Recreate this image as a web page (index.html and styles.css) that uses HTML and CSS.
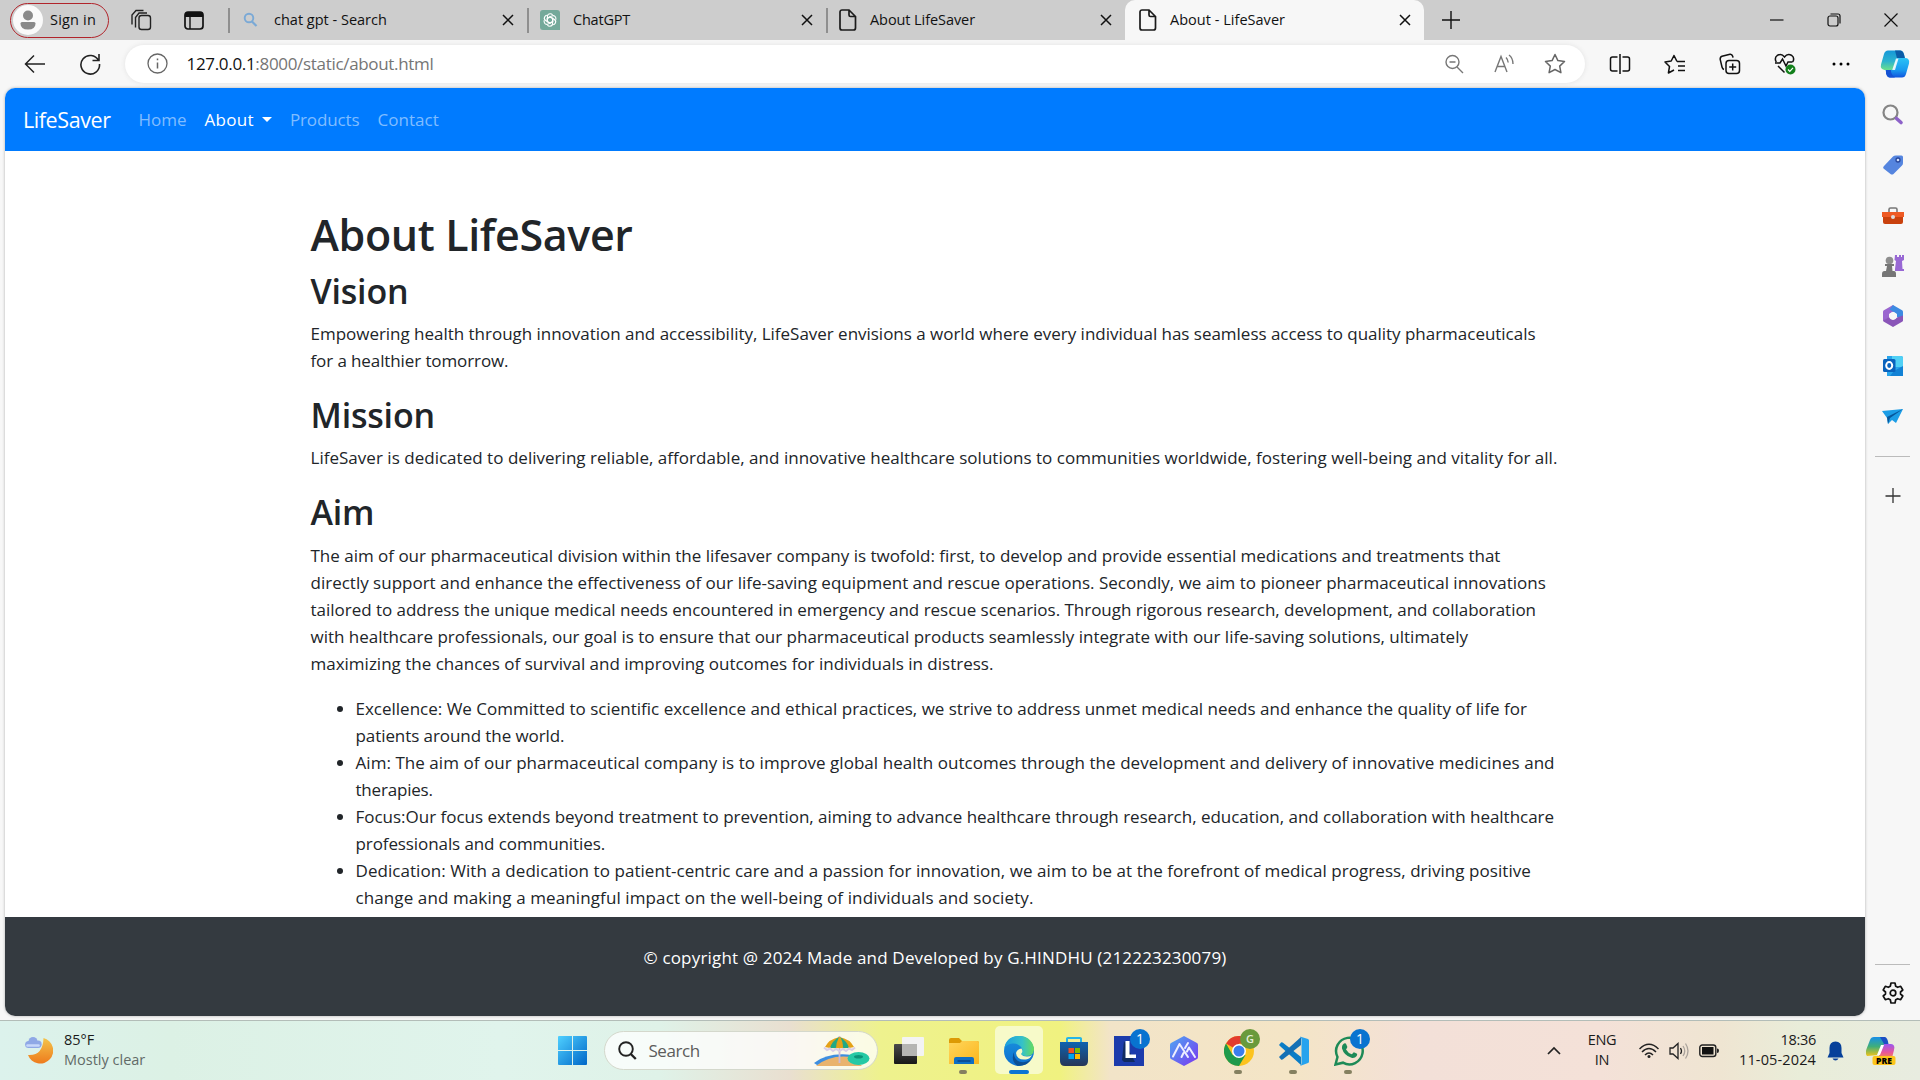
FILE: index.html
```html
<!DOCTYPE html>
<html lang="en">
<head>
<meta charset="utf-8">
<title>About - LifeSaver</title>
<link rel="stylesheet" href="styles.css">
</head>
<body>
<svg class="defs" width="0" height="0">
  <symbol id="x" viewBox="0 0 12 12"><path d="M1 1l10 10M11 1L1 11" fill="none" stroke="#111" stroke-width="1.5"/></symbol>
  <symbol id="doc" viewBox="0 0 18 22"><path d="M3 1h7l6.500 6.500V19a2 2 0 0 1-2 2H3a2 2 0 0 1-2-2V3a2 2 0 0 1 2-2zM10 1v5a1.500 1.500 0 0 0 1.500 1.500h5" fill="none" stroke="#1b1b1b" stroke-width="1.700"/></symbol>
  <linearGradient id="gcop" x1="0" y1="0" x2="0" y2="1"><stop offset="0" stop-color="#1597d8"/><stop offset=".55" stop-color="#2cb3cf"/><stop offset="1" stop-color="#6be08b"/></linearGradient>
  <linearGradient id="gcop2" x1="0" y1="0" x2="0" y2="1"><stop offset="0" stop-color="#2bc3f5"/><stop offset=".6" stop-color="#1a9cf0"/><stop offset="1" stop-color="#1155dd"/></linearGradient>
  <linearGradient id="gmoon" x1="0" y1="0" x2="0" y2="1"><stop offset="0" stop-color="#f4c44a"/><stop offset="1" stop-color="#ee7b1d"/></linearGradient>
  <linearGradient id="gwin" x1="0" y1="0" x2="1" y2="1"><stop offset="0" stop-color="#4fd0ff"/><stop offset="1" stop-color="#0067c8"/></linearGradient>
  <linearGradient id="gdark" x1="0" y1="0" x2="0" y2="1"><stop offset="0" stop-color="#4a4a4a"/><stop offset="1" stop-color="#181818"/></linearGradient>
  <linearGradient id="gfold" x1="0" y1="0" x2="1" y2="1"><stop offset="0" stop-color="#ffd55c"/><stop offset="1" stop-color="#fbb71c"/></linearGradient>
  <linearGradient id="gedge" x1="0" y1="0" x2="1" y2="0"><stop offset="0" stop-color="#1a9de0"/><stop offset=".6" stop-color="#35c1c9"/><stop offset="1" stop-color="#66dc5c"/></linearGradient>
  <linearGradient id="gedge2" x1="0" y1="0" x2="0" y2="1"><stop offset="0" stop-color="#1a93dd"/><stop offset="1" stop-color="#0d6fd0"/></linearGradient>
  <linearGradient id="gstore" x1="0" y1="0" x2="0" y2="1"><stop offset="0" stop-color="#0d63b0"/><stop offset="1" stop-color="#273657"/></linearGradient>
  <linearGradient id="gai" x1="0" y1="0" x2="1" y2="1"><stop offset="0" stop-color="#4ea8f2"/><stop offset="1" stop-color="#7a35f0"/></linearGradient>
  <linearGradient id="gpre" x1="0" y1="0" x2="0" y2="1"><stop offset="0" stop-color="#178fe8"/><stop offset=".5" stop-color="#3fae7a"/><stop offset="1" stop-color="#f0c419"/></linearGradient>
  <linearGradient id="gpre2" x1="0" y1="0" x2="0" y2="1"><stop offset="0" stop-color="#9a57f0"/><stop offset=".6" stop-color="#e8569a"/><stop offset="1" stop-color="#f08a4a"/></linearGradient>
</svg>

<header class="tabs">
  <div class="lead">
    <div class="signin">
      <svg width="30" height="30" viewBox="0 0 30 30"><circle cx="15" cy="15" r="15" fill="#fafafa"/><circle cx="15" cy="10.500" r="5" fill="#8a8a8a"/><path d="M7.500 18.500q0-1.500 1.500-1.500h12q1.500 0 1.500 1.500 0 6-7.500 6t-7.500-6z" fill="#8a8a8a"/></svg>
      <span class="t-sign">Sign in</span>
    </div>
    <svg class="ic-work" width="22" height="22" viewBox="0 0 22 22" fill="none" stroke="#222" stroke-width="1.400"><rect x="9" y="6.500" width="11.500" height="14" rx="2.500"/><path d="M5.500 18.500V8.500L9 4H17M2 15.500V6l4-4.500H13.500"/></svg>
    <svg class="ic-vtab" width="20" height="19" viewBox="0 0 20 19"><rect x="1" y="1" width="18" height="17" rx="3" fill="none" stroke="#111" stroke-width="1.700"/><path d="M1 6V4q0-3 3-3h12q3 0 3 3v2z" fill="#111"/><path d="M6 6v12" stroke="#111" stroke-width="1.400"/></svg>
  </div>
  <div class="tab"><svg class="fav" width="20" height="20" viewBox="0 0 20 20"><circle cx="8" cy="8" r="4.300" fill="none" stroke="#7aa9d6" stroke-width="1.900"/><path d="M11 11.500l4.500 4.500" stroke="#7aa9d6" stroke-width="2.200"/></svg><span class="t-tab1">chat gpt - Search</span><svg class="close" width="12" height="12"><use href="#x"/></svg></div>
  <div class="tab"><svg class="fav" width="20" height="20" viewBox="0 0 20 20"><path d="M3 0h14q3 0 3 3v17H3q-3 0-3-3V3q0-3 3-3z" fill="#74a99a"/><g fill="none" stroke="#fff" stroke-width="1.100"><g id="petal"><path d="M7.400 12V6.800q0-3 2.800-3 1.500 0 2.400 1.100M7.400 8.300l3-1.800"/></g><use href="#petal" transform="rotate(60 10 10)"/><use href="#petal" transform="rotate(120 10 10)"/><use href="#petal" transform="rotate(180 10 10)"/><use href="#petal" transform="rotate(240 10 10)"/><use href="#petal" transform="rotate(300 10 10)"/></g></svg><span class="t-tab2">ChatGPT</span><svg class="close" width="12" height="12"><use href="#x"/></svg></div>
  <div class="tab"><svg class="fav" width="18" height="22"><use href="#doc"/></svg><span class="t-tab3">About LifeSaver</span><svg class="close" width="12" height="12"><use href="#x"/></svg></div>
  <div class="tab active"><svg class="fav" width="18" height="22"><use href="#doc"/></svg><span class="t-tab4">About - LifeSaver</span><svg class="close" width="12" height="12"><use href="#x"/></svg></div>
  <svg class="newtab" width="18" height="18" viewBox="0 0 18 18"><path d="M9 0v18M0 9h18" stroke="#111" stroke-width="1.400"/></svg>
  <div class="winctl">
    <svg width="14" height="14" viewBox="0 0 14 14"><path d="M0 7h13.500" stroke="#111" stroke-width="1.200"/></svg>
    <svg width="14" height="14" viewBox="0 0 14 14" fill="none" stroke="#111" stroke-width="1.200"><rect x="1" y="3" width="10" height="10" rx="2"/><path d="M3.500 1H11q2 0 2 2v7.500"/></svg>
    <svg width="14" height="14" viewBox="0 0 14 14"><path d="M.5.5l13 13M13.500.5l-13 13" stroke="#111" stroke-width="1.200"/></svg>
  </div>
</header>

<div class="toolbar">
  <svg class="back" width="22" height="20" viewBox="0 0 22 20" fill="none" stroke="#222" stroke-width="1.500"><path d="M21 10H1.500M10 1.500L1.500 10l8.500 8.500"/></svg>
  <svg class="reload" width="22" height="22" viewBox="0 0 22 22" fill="none" stroke="#222" stroke-width="1.600"><path d="M19.500 7.500A9.300 9.300 0 1 0 20.500 11M20 1v6.500h-6.500"/></svg>
  <div class="address">
    <svg width="21" height="21" viewBox="0 0 21 21"><circle cx="10.500" cy="10.500" r="9.500" fill="none" stroke="#666" stroke-width="1.300"/><path d="M10.500 9.500v6M10.500 5.500v1.800" stroke="#666" stroke-width="1.500"/></svg>
    <span class="url">127.0.0.1<i>:8000/static/about.html</i></span>
    <div class="addr-icons">
      <svg width="20" height="20" viewBox="0 0 20 20" fill="none" stroke="#777" stroke-width="1.400"><circle cx="8.500" cy="8" r="6.500"/><path d="M13 13l6 6M5.500 8h6"/></svg>
      <svg width="21" height="20" viewBox="0 0 21 20" fill="none" stroke="#777" stroke-width="1.400"><path d="M1 18L7 2.500 13 18M3.200 12.500h7.600M12 3.500q2 2 2.200 5M15 1q4 3 4 9"/></svg>
      <svg width="22" height="21" viewBox="0 0 22 21" fill="none" stroke="#666" stroke-width="1.500" stroke-linejoin="round"><path d="M11 1.500l2.900 6.100 6.600.9-4.800 4.600 1.200 6.600-5.900-3.200-5.900 3.200 1.200-6.600-4.800-4.600 6.600-.9z"/></svg>
    </div>
  </div>
  <div class="tools">
    <svg width="22" height="20" viewBox="0 0 22 20" fill="none" stroke="#111" stroke-width="1.500"><path d="M8.500 3H3.500Q1.500 3 1.500 5v10q0 2 2 2h5M13.500 3h5q2 0 2 2v10q0 2-2 2h-5M11 0v20"/></svg>
    <svg width="22" height="20" viewBox="0 0 22 20" fill="none" stroke="#111" stroke-width="1.500" stroke-linejoin="round"><path d="M13 7.500l-3-6-2.800 5.500L1 8l4.500 4.500L4.400 19 10 16M13 7.500h8M14 12h7M14 16.500h7"/></svg>
    <svg width="22" height="22" viewBox="0 0 22 22" fill="none" stroke="#111" stroke-width="1.500"><rect x="7" y="7.500" width="13.500" height="13" rx="3"/><path d="M13.700 10.500v7M10.200 14h7M5 16.500Q3.500 16 3 14L1.200 6.500Q1 4 3 3.300L11 1.200q2-.3 2.700 2l.3 1.500"/></svg>
    <svg width="22" height="22" viewBox="0 0 22 22" fill="none" stroke="#111" stroke-width="1.500"><path d="M2.300 9Q0 5 3.200 2.500 7.500 0 10.500 4 13.500 0 17.800 2.500 21 5 18.700 9M1 10h5l2.500-4 3.500 7 2-4h4.500M4 13l6.500 6.500"/><circle cx="16.500" cy="16.500" r="5" fill="#13801c" stroke="none"/><path d="M14 16.500l1.800 1.800 3.200-3.500" stroke="#fff" stroke-width="1.200"/></svg>
    <svg width="22" height="20" viewBox="0 0 22 20"><circle cx="4" cy="10" r="1.500"/><circle cx="11" cy="10" r="1.500"/><circle cx="18" cy="10" r="1.500"/></svg>
    <svg class="copilot" width="30" height="28" viewBox="0 0 30 28"><path d="M8 .5h12q3 0 4 4l1 4h-5q-3 0-4 3L13 20H4.500Q0 19 1 14.500L4 4Q5 .5 8 .5z" fill="url(#gcop)"/><path d="M15 .5h5q3 0 4 4l1 4h-8z" fill="#0b5ca8"/><path d="M22 27.500H10q-2.500 0-3.500-3.500l-1-4h5q3 0 4-3L17.500 8H25q5 0 4 5.500L26 24q-1 3.500-4 3.500z" fill="url(#gcop2)"/><path d="M6 20h5q-.5 4 4 7.500h-5q-3 0-4-4z" fill="#1552d3"/><path d="M16 8.500h2.500L15 20h-2.800z" fill="#fff" opacity=".85"/></svg>
  </div>
</div>

<div class="middle">
  <main class="page">
    <nav class="navbar">
      <span class="brand">LifeSaver</span>
      <span class="nav-home">Home</span>
      <span class="nav-about">About</span><b class="caret"></b>
      <span class="nav-prod">Products</span>
      <span class="nav-cont">Contact</span>
    </nav>
    <div class="container">
      <h1><span class="h-a">About LifeSaver</span></h1>
      <h2><span class="h-v">Vision</span></h2>
      <p><span class="v1">Empowering health through innovation and accessibility, LifeSaver envisions a world where every individual has seamless access to quality pharmaceuticals</span><br>
      <span class="v2">for a healthier tomorrow.</span></p>
      <h2><span class="h-m">Mission</span></h2>
      <p><span class="m1">LifeSaver is dedicated to delivering reliable, affordable, and innovative healthcare solutions to communities worldwide, fostering well-being and vitality for all.</span></p>
      <h2><span class="h-i">Aim</span></h2>
      <p><span class="a1">The aim of our pharmaceutical division within the lifesaver company is twofold: first, to develop and provide essential medications and treatments that</span><br>
      <span class="a2">directly support and enhance the effectiveness of our life-saving equipment and rescue operations. Secondly, we aim to pioneer pharmaceutical innovations</span><br>
      <span class="a3">tailored to address the unique medical needs encountered in emergency and rescue scenarios. Through rigorous research, development, and collaboration</span><br>
      <span class="a4">with healthcare professionals, our goal is to ensure that our pharmaceutical products seamlessly integrate with our life-saving solutions, ultimately</span><br>
      <span class="a5">maximizing the chances of survival and improving outcomes for individuals in distress.</span></p>
      <ul>
        <li><span class="l1">Excellence: We Committed to scientific excellence and ethical practices, we strive to address unmet medical needs and enhance the quality of life for</span><br><span class="l2">patients around the world.</span></li>
        <li><span class="l3">Aim: The aim of our pharmaceutical company is to improve global health outcomes through the development and delivery of innovative medicines and</span><br><span class="l4">therapies.</span></li>
        <li><span class="l5">Focus:Our focus extends beyond treatment to prevention, aiming to advance healthcare through research, education, and collaboration with healthcare</span><br><span class="l6">professionals and communities.</span></li>
        <li><span class="l7">Dedication: With a dedication to patient-centric care and a passion for innovation, we aim to be at the forefront of medical progress, driving positive</span><br><span class="l8">change and making a meaningful impact on the well-being of individuals and society.</span></li>
      </ul>
    </div>
    <footer><span class="f1">© copyright @ 2024 Made and Developed by G.HINDHU (212223230079)</span></footer>
  </main>
  <aside class="side">
    <svg width="22" height="22" viewBox="0 0 22 22"><circle cx="8.500" cy="8.500" r="7" fill="none" stroke="#858585" stroke-width="2.200"/><path d="M14.500 14.500l4.500 4" stroke="#8d62c9" stroke-width="3.600" stroke-linecap="round"/></svg>
    <svg width="22" height="22" viewBox="0 0 22 22"><path d="M2 12L11 2.500Q12 1.500 14 1.500h5.500q1.500 0 1.500 1.500v6q0 1.500-1 2.500l-8.500 8.500q-1.500 1-3 0L1.500 14.500Q.5 13 2 12z" fill="#5585df"/><circle cx="16" cy="6" r="2" fill="#cfe0fc" stroke="#28479c" stroke-width="1.300"/></svg>
    <svg width="22" height="22" viewBox="0 0 22 22"><path d="M7 7V4.500Q7 3 8.500 3h5Q15 3 15 4.500V7" fill="none" stroke="#777" stroke-width="1.600"/><path d="M0 7h22v5H0z" fill="#ee5a24"/><path d="M1 12h20v5q0 2-2 2H3q-2 0-2-2z" fill="#c9410d"/><circle cx="11" cy="12" r="2" fill="#ddd"/></svg>
    <svg width="22" height="22" viewBox="0 0 22 22"><path d="M13 0h2v2h2V0h2v2h1V0h2v5l-2 1 .5 8h1.500v2H13v-2l1-8-1.500-1z" fill="#9868d4"/><circle cx="7.500" cy="5.500" r="3.800" fill="#8e8e8e"/><path d="M3 9h9v2h-2l.5 5h1.500q2 0 2 3v3H0v-3q0-3 2.500-3H4l1-5H3z" fill="#767676"/></svg>
    <svg width="22" height="22" viewBox="0 0 22 22"><path d="M11 0L1.500 5.500Q1 6 1 7v9l6-3.500V9l7-4z" fill="#9a66cf"/><path d="M11 0l9.500 5.500Q21 6 21 7v9l-6-4V9L7.500 4.500z" fill="#3d8ae2"/><path d="M1 15.500l6-3.500 4 3 4-2.500 6-2V15q0 1-.5 1.500L11 22l-9.500-5.500z" fill="#8a55b8"/><circle cx="11" cy="11" r="3.800" fill="#f7f7f7"/></svg>
    <svg width="22" height="22" viewBox="0 0 22 22"><path d="M5 1h14q2 0 2 2v18H5z" fill="#28a4ea"/><path d="M10 1h9q2 0 2 2v9H10z" fill="#50d0f5"/><path d="M12 16l9-5v10H8z" fill="#1282d5"/><rect x="1" y="4" width="12.500" height="13" rx="1.500" fill="#0a63bd"/><ellipse cx="7.200" cy="10.500" rx="3" ry="3.400" fill="none" stroke="#fff" stroke-width="2"/></svg>
    <svg width="22" height="22" viewBox="0 0 22 22"><path d="M0 5l21-2-7 14-4-3-4 4-1-6z" fill="#1c9de6"/><path d="M5 11L21 3 8 12l-2 6z" fill="#07569a"/></svg>
    <hr>
    <svg class="plus" width="16" height="16" viewBox="0 0 16 16"><path d="M8 0v15M.5 8h15" stroke="#333" stroke-width="1.300"/></svg>
    <hr class="low">
    <svg class="gear" width="22" height="22" viewBox="0 0 22 22" fill="none" stroke="#111" stroke-width="1.700" stroke-linejoin="round"><path d="M9 1h4l.7 3.200 2 1.100 3-1L20.800 8l-2.300 2v2l2.300 2-2.100 3.700-3-1-2 1.100L13 21H9l-.7-3.200-2-1.100-3 1L1.200 14l2.300-2v-2L1.200 8l2.100-3.700 3 1 2-1.100z"/><circle cx="11" cy="11" r="2.800"/></svg>
  </aside>
</div>

<div class="taskbar">
  <div class="weather">
    <svg width="28" height="30" viewBox="0 0 28 30"><path d="M18.500 2A13 13 0 1 1 3 19Q18 20 18.500 2z" fill="url(#gmoon)"/><g fill="#8fa8e6"><circle cx="8" cy="5.500" r="4.500"/><circle cx="3.600" cy="8.500" r="3.500"/><circle cx="13" cy="8.300" r="3.700"/><rect x="3" y="6" width="10" height="6"/></g><path d="M2.500 9.500h11" stroke="#c8d8fa" stroke-width="2.600" stroke-linecap="round"/></svg>
    <div class="wtext"><span class="w1">85°F</span><span class="w2">Mostly clear</span></div>
  </div>
  <svg class="start" width="29" height="29" viewBox="0 0 29 29"><path d="M0 1q0-1 1-1h13v14H0zM15 0h13q1 0 1 1v13H15zM0 15h14v14H1q-1 0-1-1zM15 15h14v13q0 1-1 1H15z" fill="url(#gwin)"/></svg>
  <div class="search">
    <svg width="19" height="19" viewBox="0 0 19 19"><circle cx="8" cy="8" r="6.800" fill="none" stroke="#222" stroke-width="1.900"/><path d="M12.800 13l5 5" stroke="#222" stroke-width="2.400"/></svg>
    <span class="s1">Search</span>
    <svg class="beach" width="56" height="32" viewBox="0 0 56 32"><path d="M0 28Q14 17 38 20l3 4-38 6z" fill="#3d8ee0"/><path d="M2 31Q16 19 38 22l10 9z" fill="#e9b36d"/><path d="M25.500 1v27" stroke="#cbb9d6" stroke-width="1.800"/><path d="M11 12Q15 4 25.500 2 36 4 40 12q-7 2-14.500 1Q18 14 11 12z" fill="#e4a117"/><path d="M16 13Q18 6 25 2q-3 6-3 11zM29 13Q29 6 26 2q7 4 9 11z" fill="#22a884"/><path d="M10 12.500l3 2.500 3-1.500 3 2.500 3-2 3.500 2 3.500-2 3 2 3-2.500 3 1.500 3-2.500" fill="none" stroke="#d9cde6" stroke-width="2"/><ellipse cx="44.500" cy="23.500" rx="11" ry="6.500" fill="#26c9a5"/><ellipse cx="44.500" cy="21.800" rx="4.500" ry="1.800" fill="#0c9478"/></svg>
  </div>
  <div class="apps">
    <div class="app"><svg width="30" height="30" viewBox="0 0 30 30"><rect y="8" width="23" height="20" rx="1" fill="url(#gdark)"/><rect x="8" y="1" width="22" height="19" rx="1" fill="#f3f3f3"/><path d="M8 8h15v12H8z" fill="#b5b5b3"/></svg></div>
    <div class="app"><svg width="30" height="30" viewBox="0 0 30 30"><path d="M0 4q0-2 2-2h8l3 3h15q2 0 2 2v4H0z" fill="#dc9a05"/><path d="M0 7h11l2-2h15q2 0 2 2v21H0z" fill="url(#gfold)"/><path d="M5 28v-5q0-2 2-2h16q2 0 2 2v5z" fill="#0f6fc4"/><path d="M8.500 25h13" stroke="#0a3f82" stroke-width="1.300"/></svg><i class="dot"></i></div>
    <div class="app sel"><svg width="30" height="30" viewBox="0 0 30 30"><circle cx="15" cy="15" r="15" fill="url(#gedge2)"/><path d="M.3 12Q2.500 0 15 0q12 0 15 12 .5 8-8 8-5 0-5-2.500 2-1.500 1-5Q15 7 8.500 7.500 3 8 .3 12z" fill="url(#gedge)"/><path d="M10.500 15Q8.500 22 15 25.500q6 2 12-2Q22 31 13 29.500 6 24 10.500 15z" fill="#0c4f94"/><path d="M12 17q1-4 5.500-4.500 2 3-.5 5.500 1.500 2.500 6 2.500 3 0 5-1.500-2 4-6 4.500-9 1-10-6.500z" fill="#f6f9c6"/></svg><i class="dot bar"></i></div>
    <div class="app"><svg width="30" height="30" viewBox="0 0 30 30"><path d="M8 7V2.500Q8 2 9 2h12q1 0 1 .5V7" fill="none" stroke="#24b5e8" stroke-width="2"/><path d="M1 6h28v19q0 5-5 5H6q-5 0-5-5z" fill="url(#gstore)"/><path d="M9.500 12H15v5H9.500z" fill="#f25022"/><path d="M16 12h5v5h-5z" fill="#7fba00"/><path d="M9.500 18H15v5H9.500z" fill="#00a4ef"/><path d="M16 18h5v5h-5z" fill="#ffb900"/></svg></div>
    <div class="app"><svg width="30" height="30" viewBox="0 0 30 30"><path d="M0 0h30v30H0z" fill="#1c3bac"/><path d="M10 5L8 24l2 2h11z" fill="#102a62"/><path d="M11.500 5h4v13.500H22V22H11.500z" fill="#fff"/></svg><b class="badge">1</b></div>
    <div class="app"><svg width="30" height="30" viewBox="0 0 30 30"><path d="M15 0l13 7q1 .5 1 2v12q0 1.500-1 2l-13 7-13-7q-1-.5-1-2V9q0-1.500 1-2z" fill="url(#gai)"/><path d="M4 20.500L10.500 8 19 21M12.500 21l2-4M18 15.500l2-4L26 21M16 12l3-5" fill="none" stroke="#eef" stroke-width="2" stroke-linejoin="round" stroke-linecap="round"/></svg></div>
    <div class="app"><svg width="30" height="30" viewBox="0 0 30 30"><circle cx="15" cy="15" r="15" fill="#fcc31e"/><path d="M15 15L2 7.500A15 15 0 0 1 28 7.500H15z" fill="#e33b2e"/><path d="M2 7.500l6.500 11.300L21.500 19 15 30A15 15 0 0 1 2 7.500z" fill="#1f9a4c"/><circle cx="15" cy="15" r="7" fill="#fff"/><circle cx="15" cy="15" r="5.500" fill="#3b7ded"/></svg><b class="badge green">G</b><i class="dot"></i></div>
    <div class="app"><svg width="30" height="30" viewBox="0 0 30 30"><path d="M22 1L2 19l-2 2 2 2.500q1 .5 2-.2L22 9z" fill="#0b7dc6" transform="matrix(1 0 0 -1 0 30)"/><path d="M22 1L2 19l-2 2 2 2.500q1 .5 2-.2L22 9z" fill="#1470b5"/><path d="M21 .5L29 3q1 .5 1 1.500v21q0 1-1 1.500l-8 3q1.500-1 1.500-3V3.500q0-2-1.500-3z" fill="#27a3ee"/></svg><i class="dot"></i></div>
    <div class="app"><svg width="30" height="30" viewBox="0 0 30 30"><path d="M1.500 28.500l2-7.500A13.300 13.300 0 1 1 9 26.700z" fill="none" stroke="#1d8a57" stroke-width="2.500"/><path d="M10 7.500q1.500-.8 2 .3l1.300 3q.3.800-1.300 2.700 2.200 3.700 5.700 4.800 1-.8 1.800-1.900.5-.5 3.500 1.400.5.500-.3 2.200-2 2.600-5.200 1.800Q10 19.500 8 12.500q-.4-3.500 2-5z" fill="#1d8a57"/></svg><b class="badge">1</b><i class="dot"></i></div>
  </div>
  <div class="tray">
    <svg class="chev" width="14" height="9" viewBox="0 0 14 9"><path d="M1 8l6-6 6 6" fill="none" stroke="#222" stroke-width="1.700"/></svg>
    <div class="lang"><span class="g1">ENG</span><span class="g2">IN</span></div>
    <svg class="wifi" width="20" height="16" viewBox="0 0 20 16" fill="none" stroke="#222" stroke-width="1.500"><path d="M.5 6q9.500-9.500 19 0M3 9q7-7 14 0M6 12q4-4 8 0"/><circle cx="10" cy="13.500" r="1.500" fill="#222" stroke="none"/></svg>
    <svg class="vol" width="20" height="18" viewBox="0 0 20 18" fill="none" stroke="#222" stroke-width="1.300"><path d="M1 6h3l5-4.500v15L4 12H1zM11.500 6q2 3 0 6"/><path d="M14 4q3.500 5 0 10M16.500 1.500q5 7.500 0 15" stroke="#aaa39c"/></svg>
    <svg class="bat" width="20" height="14" viewBox="0 0 20 14"><rect x=".8" y="1" width="16" height="11.500" rx="2.500" fill="none" stroke="#222" stroke-width="1.400"/><rect x="3" y="3" width="11.500" height="7.500" fill="#111"/><path d="M18 4.500q2 0 2 2.200T18 9z" fill="#222"/></svg>
    <div class="clock"><span class="c1">18:36</span><span class="c2">11-05-2024</span></div>
    <svg class="bell" width="17" height="20" viewBox="0 0 17 20"><path d="M8.500.5q6 .3 6 6.500v5l2 4.500H.5l2-4.500V7q0-6.200 6-6.500zM5.500 17.500h6q-1 2-3 2t-3-2z" fill="#06409a"/></svg>
    <svg class="pre" width="30" height="28" viewBox="0 0 30 28"><path d="M8 0h11l3 7-4 1-5 10-12 1Q-1 17 .5 12L4 3Q5 0 8 0z" fill="url(#gpre)"/><path d="M14 0h5q2.500.5 3.500 7H18z" fill="#1b4fc4"/><path d="M18 7h7q4.500.5 3 6l-2 8H12z" fill="url(#gpre2)"/><path d="M15 8h3l-4 10h-3z" fill="#fff"/><rect x="6.500" y="19" width="23" height="9" rx="2" fill="#fcc51c"/><text x="18" y="26.600" text-anchor="middle" font-size="8.500" font-weight="800" font-family="Open Sans, sans-serif">PRE</text></svg>
  </div>
</div>
</body>
</html>
```
FILE: styles.css
```css
* { box-sizing: border-box; }
body { margin: 0; width: 1920px; height: 1080px; overflow: hidden; display: flex; flex-direction: column; background: #f7f7f7; font-family: "Open Sans", "Noto Sans", sans-serif; color: #212529; }
svg { display: block; flex: none; }
span { white-space: nowrap; }
.defs { position: absolute; }

.tabs { height: 40px; flex: none; display: flex; align-items: center; background: #cdcdcd; font-size: 14.5px; color: #111; }
.tabs span { padding-bottom: 2px; }
.lead { width: 228px; display: flex; align-items: center; padding-left: 10px; }
.signin { width: 99px; height: 35px; border: 1.5px solid #b1242b; border-radius: 18px; display: flex; align-items: center; padding-left: 2px; gap: 7px; }
.t-sign { letter-spacing: .18px; }
.t-tab2 { letter-spacing: -.217px; }
.t-tab3 { letter-spacing: -.078px; }
.t-tab4 { letter-spacing: .024px; }
.ic-work { margin-left: 21px; }
.ic-vtab { margin-left: 32px; }
.tab { width: 299px; height: 25px; display: flex; align-items: center; padding: 0 13px 0 11px; border-left: 2px solid #8f8f8f; }
.tab .fav { margin-right: 13px; }
.tab .close { margin-left: auto; }
.tab.active { height: 40px; background: #f7f7f7; border: 0; border-radius: 10px 10px 0 0; padding-left: 14px; }
.newtab { margin-left: 18px; }
.winctl { margin-left: auto; display: flex; gap: 43px; padding-right: 22px; }

.toolbar { height: 48px; flex: none; display: flex; align-items: center; padding-bottom: 1px; }
.back { margin-left: 24px; }
.reload { margin-left: 33px; }
.address { margin-left: 24px; width: 1460px; height: 38px; border-radius: 19px; background: #fff; box-shadow: 0 0 5px #e2e2e2; display: flex; align-items: center; padding: 0 19px 0 22px; }
.url { margin-left: 18.5px; font-size: 17px; letter-spacing: -.318px; color: #111; padding-bottom: 1px; }
.url i { font-style: normal; color: #757575; }
.addr-icons { margin-left: auto; display: flex; align-items: center; gap: 29.5px; }
.tools { display: flex; align-items: center; gap: 33.3px; margin-left: 23.5px; }
.copilot { margin-left: -5px; }

.middle { height: 932px; flex: none; display: flex; padding-left: 5px; }
.page { width: 1860px; height: 928px; background: #fff; border-radius: 10px; overflow: hidden; box-shadow: 0 0 3px #aaa; display: flex; flex-direction: column; }
.navbar { height: 63px; flex: none; background: #007bff; display: flex; align-items: center; padding-left: 18px; font-size: 17px; color: #80bdff; }
.brand { font-size: 21.5px; letter-spacing: -.42px; color: #fff; margin-right: 28px; }
.nav-home { margin-right: 18px; }
.nav-about { color: #fff; letter-spacing: .3px; }
.nav-prod { margin-right: 18px; letter-spacing: -.13px; }
.nav-cont { letter-spacing: .06px; }
.caret { margin-left: 8px; margin-right: 18px; border: 5px solid transparent; border-top-color: #fff; border-bottom: 0; }
.container { width: 1249px; margin: 0 auto; padding-top: 54px; height: 766px; flex: none; font-size: 17px; line-height: 27px; }
h1, h2 { margin: 0 0 9px; font-weight: 600; }
h1 { font-size: 43px; line-height: 54px; letter-spacing: -.369px; padding-top: 3px; margin-bottom: 6px; }
h2 { font-size: 34px; line-height: 43.2px; letter-spacing: -.2px; padding-top: 2px; margin-bottom: 7px; }
p { margin: 0 0 18px; }
ul { margin: 0; padding-left: 45px; }
.v1, .a3 { letter-spacing: -.022px; }
.v2 { letter-spacing: -.104px; }
.m1 { letter-spacing: .024px; }
.a1, .a4 { letter-spacing: -.009px; }
.l2 { letter-spacing: -.077px; }
.l3 { letter-spacing: .049px; }
.l4 { letter-spacing: -.2px; }
.l5 { letter-spacing: -.018px; }
.l6 { letter-spacing: -.096px; }
.l7 { letter-spacing: .054px; }
.l8 { letter-spacing: .104px; }
footer { flex: 1; background: #343a40; color: #fff; text-align: center; padding-top: 27px; font-size: 17px; line-height: 27px; letter-spacing: .176px; }

.side { width: 55px; display: flex; flex-direction: column; align-items: center; padding-top: 16px; }
.side > svg { margin-bottom: 28.3px; }
.side hr { width: 35px; height: 1px; margin: 0; border: 0; background: #bbb; flex: none; }
.side > .plus { margin: 31px 0 0; }
.side hr.low { margin-top: auto; }
.side > .gear { margin: 17px 0 16px; }

.taskbar { height: 60px; flex: none; display: flex; align-items: center; border-top: 1px solid #b3bdb8; background: linear-gradient(90deg, #dcf2ec 0, #dcf1e5 170px, #e0f4ec 500px, #dff2e8 660px, #e9dfd0 790px, #eef28e 880px, #f0f280 1060px, #f2e4c8 1110px, #f4e5c6 1290px, #f3e0d8 1420px, #f4e1d8 1600px, #efe5d2 1720px, #e9edd9 1800px, #e8ece0 1920px); }
.weather { width: 557.500px; display: flex; align-items: center; padding-left: 25px; gap: 11px; }
.wtext, .lang, .clock { display: flex; flex-direction: column; font-size: 14.5px; line-height: 20px; color: #1a1a1a; padding-bottom: 2px; }
.w2 { color: #626b67; }
.search { margin-left: 17px; width: 274px; height: 39px; border-radius: 20px; border: 1px solid #d4d8cc; background: rgba(255,255,255,.75); display: flex; align-items: center; padding: 0 7px 0 13px; }
.s1 { margin-left: 12px; font-size: 17px; letter-spacing: -.45px; color: #5c5c5c; }
.beach { margin-left: auto; }
.apps { display: flex; margin-left: 3.5px; }
.app { width: 55px; height: 59px; display: flex; align-items: center; justify-content: center; position: relative; }
.sel::before { content: ""; position: absolute; inset: 5px 3px 6px 4px; border-radius: 5px; background: #f7fac9; }
.sel svg { position: relative; }
.dot { position: absolute; left: 23px; bottom: 6px; width: 8px; height: 4px; border-radius: 2px; background: #858060; }
.dot.bar { left: 18px; width: 20px; background: #0a74d4; }
.badge { position: absolute; left: 29px; top: 8px; width: 20px; height: 20px; border-radius: 10px; background: #0873d0; color: #fff; font-size: 14px; font-weight: 400; line-height: 20px; text-align: center; }
.badge.green { background: #699a3b; font-size: 11px; font-weight: 600; color: #e6f0dc; }
.tray { margin-left: auto; display: flex; align-items: center; height: 59px; }
.lang { align-items: center; width: 30px; margin-left: 26px; }
.g1, .g2, .c1 { letter-spacing: -.3px; }
.clock { align-items: flex-end; width: 78px; margin-left: 19px; }
.c2 { letter-spacing: .133px; }
.wifi { margin-left: 22px; }
.vol { margin-left: 10px; }
.bat { margin-left: 10px; }
.bell { margin-left: 11px; }
.pre { margin-left: 22px; margin-right: 24px; }
```
